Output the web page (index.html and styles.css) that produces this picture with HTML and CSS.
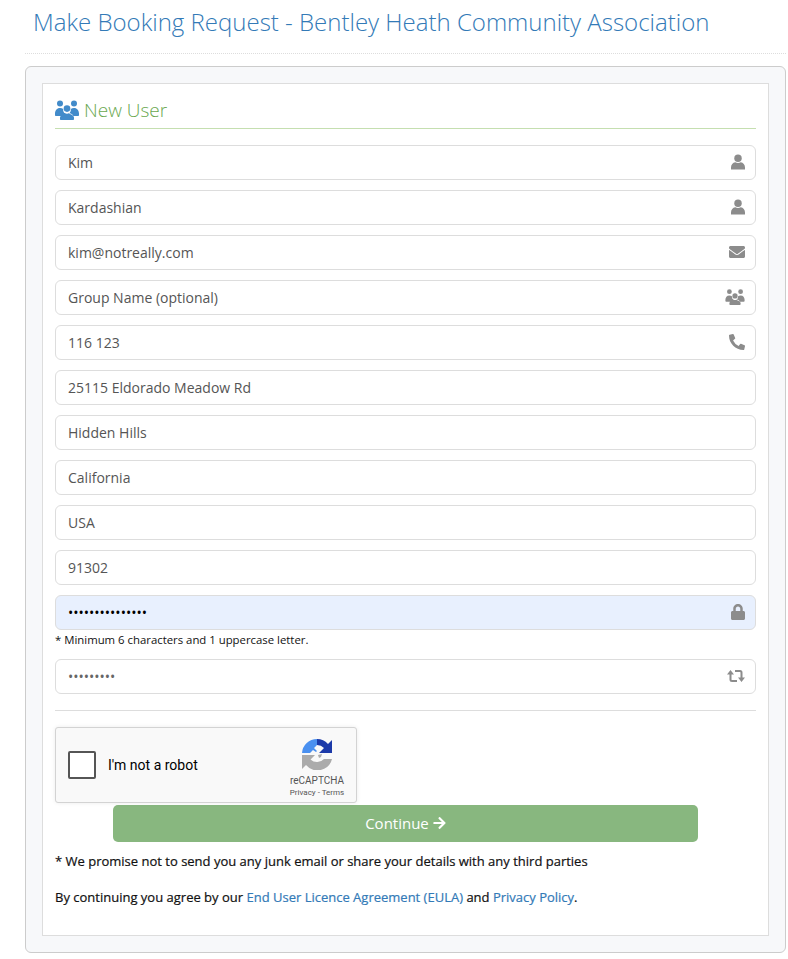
FILE: index.html
```html
<!DOCTYPE html>
<html lang="en">
<head>
<meta charset="utf-8">
<title>Make Booking Request</title>
<link rel="stylesheet" href="styles.css">
</head>
<body>
<svg class="sprites" aria-hidden="true">
  <defs>
    <symbol id="i-group" viewBox="0 0 24 20"><circle cx="5" cy="3.400" r="3"/><circle cx="19" cy="3.400" r="3"/><circle cx="12" cy="8.600" r="3.300"/><path d="M0 13.400C0 10.700 1.800 8 5 8c1.300 0 2.400.4 3.200 1.100-.3 2 .6 3.500 1.800 4.600-2.300.6-3.700 1.600-4.300 2.300H1c-.6 0-1-.4-1-1zM24 13.400C24 10.700 22.200 8 19 8c-1.300 0-2.400.4-3.200 1.100.3 2-.6 3.500-1.800 4.600 2.300.6 3.700 1.600 4.300 2.300H23c.6 0 1-.4 1-1zM5 17.500C5.500 14.800 8 13.200 9.700 13c1.400 1 3.200 1 4.600 0 1.700.2 4.200 1.800 4.700 4.500V19c0 .6-.4 1-1 1H6c-.6 0-1-.4-1-1z"/></symbol>
    <symbol id="i-person" viewBox="0 0 15 16"><circle cx="7.500" cy="4" r="4"/><path d="M0 14c0-3 2-5.300 4.500-5.700 1.800.9 4.200.9 6 0C13 8.700 15 11 15 14v2H0z"/></symbol>
  </defs>
</svg>
<header class="page-header"><h1>Make Booking Request - Bentley Heath Community Association</h1></header>
<main class="panel">
  <form class="box">
    <h2 class="legend">
      <svg class="legend-icon"><use href="#i-group"/></svg>
      <span>New User</span>
    </h2>
    <div class="fields">
      <div class="field"><input class="control" type="text" value="Kim" aria-label="First name">
        <svg class="icon"><use href="#i-person"/></svg></div>
      <div class="field"><input class="control" type="text" value="Kardashian" aria-label="Last name">
        <svg class="icon"><use href="#i-person"/></svg></div>
      <div class="field"><input class="control" type="text" value="kim@notreally.com" aria-label="Email">
        <svg class="icon icon-wide" viewBox="0 0 512 512"><path d="M502.300 190.800c3.900-3.100 9.700-.2 9.700 4.700V400c0 26.500-21.500 48-48 48H48c-26.500 0-48-21.500-48-48V195.600c0-5 5.700-7.800 9.700-4.700 22.400 17.400 52.100 39.500 154.100 113.600 21.100 15.400 56.700 47.800 92.200 47.600 35.700.3 72-32.800 92.300-47.600 102-74.100 131.600-96.300 154-113.700zM256 320c23.200.4 56.600-29.200 73.400-41.400 132.700-96.300 142.800-104.700 173.400-128.700 5.800-4.500 9.200-11.500 9.200-18.900v-19c0-26.500-21.500-48-48-48H48C21.500 64 0 85.500 0 112v19c0 7.400 3.400 14.300 9.200 18.900 30.600 23.900 40.700 32.400 173.400 128.700 16.800 12.200 50.200 41.800 73.400 41.400z"/></svg></div>
      <div class="field"><input class="control" type="text" placeholder="Group Name (optional)" aria-label="Group name">
        <svg class="icon icon-group"><use href="#i-group"/></svg></div>
      <div class="field"><input class="control" type="text" value="116 123" aria-label="Phone">
        <svg class="icon icon-wide" viewBox="0 0 512 512"><path d="M497.400 361.800l-112-48a24 24 0 0 0-28 6.900l-49.600 60.600A370.700 370.700 0 0 1 130.600 204.100l60.600-49.600a23.900 23.900 0 0 0 6.900-28l-48-112A24.200 24.200 0 0 0 122.600.6l-104 24A24 24 0 0 0 0 48c0 256.500 207.900 464 464 464a24 24 0 0 0 23.400-18.600l24-104a24.300 24.300 0 0 0-14-27.600z"/></svg></div>
      <div class="field"><input class="control" type="text" value="25115 Eldorado Meadow Rd" aria-label="Address"></div>
      <div class="field"><input class="control" type="text" value="Hidden Hills" aria-label="City"></div>
      <div class="field"><input class="control" type="text" value="California" aria-label="State"></div>
      <div class="field"><input class="control" type="text" value="USA" aria-label="Country"></div>
      <div class="field"><input class="control" type="text" value="91302" aria-label="Postal code"></div>
      <div class="field-note">
        <div class="field"><input class="control control-filled" type="password" value="aaaaaaaaaaaaaaa" aria-label="Password">
          <svg class="icon" viewBox="0 0 448 512"><path d="M400 224h-24v-72C376 68.200 307.800 0 224 0S72 68.200 72 152v72H48c-26.500 0-48 21.500-48 48v192c0 26.500 21.500 48 48 48h352c26.500 0 48-21.500 48-48V272c0-26.500-21.500-48-48-48zm-104 0H152v-72c0-39.700 32.300-72 72-72s72 32.300 72 72v72z"/></svg></div>
        <p class="note">* Minimum 6 characters and 1 uppercase letter.</p>
      </div>
      <div class="field"><input class="control control-dim" type="password" value="aaaaaaaaa" aria-label="Confirm password">
        <svg class="icon icon-retweet" viewBox="0 0 18 12"><path class="retweet-line" d="M3.500 4v5.500a1.500 1.500 0 0 0 1.500 1.500h5M8 1h5a1.500 1.500 0 0 1 1.500 1.500V8"/><path d="M0 4.500 3.500 0 7 4.500zM11 7.500h7L14.500 12z"/></svg></div>
    </div>
    <hr class="rule">
    <div class="captcha">
      <span class="captcha-check"></span>
      <span class="captcha-label">I'm not a robot</span>
      <div class="captcha-brand">
        <svg class="captcha-logo" viewBox="0 0 32 32">
          <path fill="#1c3aa9" d="M16 1a15 15 0 0 1 11 5l4-4v13H18l5-5a9.500 9.500 0 0 0-7-3z"/>
          <path fill="#4a90f0" d="M16 1A15 15 0 0 0 1 15h8l3-3 3 2 1-1-3-3 3-3z"/>
          <path fill="#ababab" d="M1 17h13l-4.500 4.500A9.500 9.500 0 0 0 23 21h8A15 15 0 0 1 5 27l-4 4z"/>
          <path fill="#ababab" d="M17 17l4-1-1 3-2 1z"/>
        </svg>
        <span class="captcha-name">reCAPTCHA</span>
        <span class="captcha-links">Privacy - Terms</span>
      </div>
    </div>
    <button class="continue" type="button">Continue <svg class="arrow" viewBox="0 0 448 512"><path fill="#fff" d="m190.500 66.900 22.200-22.200c9.400-9.400 24.600-9.400 33.900 0L441 239c9.400 9.400 9.400 24.600 0 33.900L246.600 467.300c-9.400 9.400-24.600 9.400-33.900 0l-22.200-22.200c-9.500-9.500-9.300-25 .4-34.300L311.400 296H24c-13.300 0-24-10.700-24-24v-32c0-13.300 10.700-24 24-24h287.400L190.900 101.200c-9.800-9.300-10-24.800-.4-34.300z"/></svg></button>
    <p class="promise">* We promise not to send you any junk email or share your details with any third parties</p>
    <p class="agree">By continuing you agree by our <a href="#">End User Licence Agreement (EULA)</a> and <a href="#">Privacy Policy</a>.</p>
  </form>
</main>
</body>
</html>
```
FILE: styles.css
```css
* { box-sizing: border-box; }
html, body { margin: 0; padding: 0; background: #fff; }
body { font-family: "Open Sans", sans-serif; font-size: 14px; color: #111; padding: 0 2px 0 25px; height: 959px; overflow: hidden; }
.sprites { display: none; }
.page-header { height: 54px; border-bottom: 1px dotted #ddd; margin-bottom: 12px; padding: 5px 0 0 8px; }
h1 { margin: 0; font-size: 24px; line-height: 34px; font-weight: 300; color: #337ab7; white-space: nowrap; }
.panel { height: 887px; padding: 16px; background: #f7f8fa; border: 1px solid #ccc; border-radius: 6px; }
.box { height: 853px; background: #fff; border: 1px solid #ddd; padding: 12px; }
.legend { margin: 0 0 16px; height: 33px; padding-bottom: 4px; display: flex; align-items: center; gap: 5px; border-bottom: 1px solid #c5dfb0; font-size: 19px; font-weight: 300; color: #6aa84f; }
.legend-icon { width: 24px; height: 20px; fill: #428bca; }
.fields { display: flex; flex-direction: column; gap: 10px; }
.field { position: relative; height: 35px; }
.control { display: block; width: 100%; height: 35px; padding: 0 12px; border: 1px solid #ddd; border-radius: 6px; background: #fff; font: 14px "Open Sans", sans-serif; color: #555; outline: none; }
.control::placeholder { color: #555; opacity: 1; }
.control-filled { background: #e8f0fe; color: #000; }
.control-dim { color: #666; }
.icon { position: absolute; right: 11px; top: 9px; width: 14px; height: 16px; fill: #8c8c8c; }
.icon-wide { width: 16px; }
.icon-group { width: 20px; }
.icon-retweet { width: 18px; height: 12px; top: 11px; }
.retweet-line { fill: none; stroke: #8c8c8c; stroke-width: 2; }
.field-note { display: flex; flex-direction: column; }
.note { margin: 2px 0 0; height: 17px; font-size: 11.36px; line-height: 16px; color: #111; }
.rule { margin: 16px 0; border: 0; border-top: 1px solid #ddd; }
.captcha { width: 302px; height: 76px; display: flex; align-items: center; background: #f9f9f9; border: 1px solid #d3d3d3; border-radius: 3px; box-shadow: 0 0 4px rgba(0,0,0,.08); position: relative; font-family: Roboto, sans-serif; }
.captcha-check { width: 28px; height: 28px; margin-left: 12px; background: #fff; border: 2px solid #555; border-radius: 2px; }
.captcha-label { margin-left: 12px; font-size: 14px; color: #000; }
.captcha-brand { position: absolute; right: 6px; top: 10px; width: 66px; display: flex; flex-direction: column; align-items: center; color: #555; }
.captcha-logo { width: 32px; height: 32px; }
.captcha-name { font-size: 10px; line-height: 12px; margin-top: 5px; }
.captcha-links { font-size: 8px; line-height: 12px; }
.continue { display: flex; align-items: center; justify-content: center; gap: 4px; width: 585px; height: 37px; margin: 2px auto 0; border: 0; border-radius: 5px; background: #88b77f; color: #fff; font: 15px "Open Sans", sans-serif; padding: 0 0 2px; }
.arrow { width: 13px; height: 14px; }
.promise { margin: 10px 0 0; font-size: 13px; line-height: 18px; font-weight: 400; color: #111; -webkit-text-stroke: .2px #111; }
.agree { margin: 18px 0 0; font-size: 13px; line-height: 18px; color: #111; -webkit-text-stroke: .2px #111; }
.agree a { color: #337ab7; text-decoration: none; -webkit-text-stroke: .2px #337ab7; }
```
